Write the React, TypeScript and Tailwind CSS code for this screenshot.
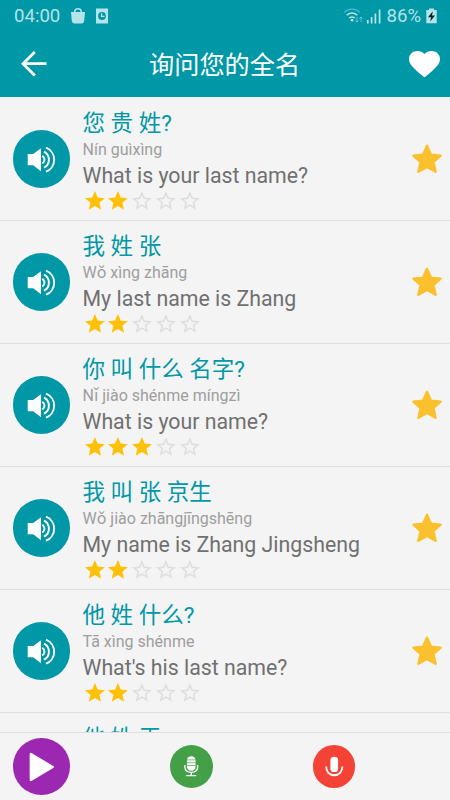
import React from "react";

type Phrase = { hanzi: string; pinyin?: string; english?: string; rating: number };

const phrases: Phrase[] = [
  { hanzi: "您 贵 姓?", pinyin: "Nín guìxìng", english: "What is your last name?", rating: 2 },
  { hanzi: "我 姓 张", pinyin: "Wǒ xìng zhāng", english: "My last name is Zhang", rating: 2 },
  { hanzi: "你 叫 什么 名字?", pinyin: "Nǐ jiào shénme míngzì", english: "What is your name?", rating: 3 },
  { hanzi: "我 叫 张 京生", pinyin: "Wǒ jiào zhāngjīngshēng", english: "My name is Zhang Jingsheng", rating: 2 },
  { hanzi: "他 姓 什么?", pinyin: "Tā xìng shénme", english: "What's his last name?", rating: 2 },
  { hanzi: "他 姓 王", rating: 2 },
];

function SpeakerIcon() {
  return (
    <svg viewBox="0 0 57 57" className="size-[57px]" fill="none" aria-hidden="true">
      <path d="M14.7 23H20.2L28 17.2V40.2L20.2 34.2H14.7Z" fill="#fff" />
      <g stroke="#fff" strokeWidth="1.9">
        <path d="M29.3 24.9A4.4 4.4 0 0 1 29.3 32.5" />
        <path d="M31 20.7A9 9 0 0 1 31 36.7" />
        <path d="M33 16.7A12.9 12.9 0 0 1 33 40.7" />
      </g>
    </svg>
  );
}

function RatingStar({ filled }: { filled: boolean }) {
  return (
    <svg viewBox="0 0 24 24" className="size-[23.8px]" aria-hidden="true">
      {filled ? (
        <path fill="#ffc107" d="M12 17.27 18.18 21l-1.64-7.03L22 9.24l-7.19-.61L12 2 9.19 8.63 2 9.24l5.46 4.73L5.82 21z" />
      ) : (
        <path fill="#dedede" d="M22 9.24l-7.19-.62L12 2 9.19 8.63 2 9.24l5.46 4.73L5.82 21 12 17.27 18.18 21l-1.63-7.03L22 9.24zM12 15.4l-3.76 2.27 1-4.28-3.32-2.88 4.38-.38L12 6.1l1.71 4.04 4.38.38-3.32 2.88 1 4.28L12 15.4z" />
      )}
    </svg>
  );
}

function FavoriteStar() {
  return (
    <svg viewBox="0 0 30 30" className="size-[30px]" aria-hidden="true">
      <path
        d="M15 1.8 19 10.7 28.6 11.7 21.4 18.1 23.6 27.8 15 23 6.4 27.8 8.6 18.1 1.4 11.7 11 10.7Z"
        fill="#fbc02d"
        stroke="#fbc02d"
        strokeWidth="2.4"
        strokeLinejoin="round"
      />
    </svg>
  );
}

function PhraseRow({ phrase }: { phrase: Phrase }) {
  return (
    <li className="flex h-[123px] shrink-0 items-center border-b border-[#dedede] pr-[8px] pl-[12.5px]">
      <button className="size-[57.5px] shrink-0 rounded-full bg-[#0097a7]" aria-label="Play">
        <SpeakerIcon />
      </button>
      <div className="ml-[12.5px] flex h-full flex-1 flex-col pt-[10px] whitespace-nowrap">
        <p className="h-[30px] text-[22.5px] leading-[30px] text-[#0097a7]">{phrase.hanzi}</p>
        <p className="h-[24px] text-[16px] leading-[23px] text-[#9e9e9e]">{phrase.pinyin}</p>
        <p className="h-[27px] text-[21.3px] leading-[28px] text-[#707070]">{phrase.english}</p>
        <div className="flex">
          {[1, 2, 3, 4, 5].map((n) => (
            <RatingStar key={n} filled={n <= phrase.rating} />
          ))}
        </div>
      </div>
      <FavoriteStar />
    </li>
  );
}

function StatusBar() {
  return (
    <div className="flex h-[31px] items-center pr-[13.5px] pl-[14px] text-[18.6px] leading-[31px] text-[#b4e3e8]">
      <span className="w-[48px] pt-[2px] whitespace-nowrap">04:00</span>
      <svg viewBox="0 0 16 18" className="ml-[8px] h-[18px] w-[16px]" aria-hidden="true">
        <path d="M1 5H15L14.2 14Q13.8 16.5 11.5 16.5H4.5Q2.2 16.5 1.8 14Z" fill="currentColor" />
        <path d="M4.8 6V4.5Q4.8 1.8 8 1.8T11.2 4.5V6" fill="none" stroke="currentColor" strokeWidth="1.5" />
      </svg>
      <svg viewBox="0 0 12 16" className="ml-[10px] h-[16px] w-[12px]" aria-hidden="true">
        <path d="M0 0.5H12V15.5H0Z" fill="currentColor" />
        <circle cx="6" cy="8" r="3.9" fill="#0097a7" />
        <path d="M5.6 5.2V8.3H8.6" fill="none" stroke="currentColor" strokeWidth="1.2" />
      </svg>
      <svg viewBox="0 0 40 18" className="ml-auto h-[18px] w-[40px]" fill="none" aria-hidden="true">
        <g stroke="currentColor" strokeWidth="1.5">
          <path d="M1 5.3Q9 -1.4 17 5.3" opacity=".45" />
          <path d="M3.7 8.1Q9 3.8 14.3 8.1" />
          <path d="M6.2 11Q9 8.8 11.8 11" />
        </g>
        <circle cx="9" cy="13.2" r="1.4" fill="currentColor" />
        <path d="M14 10V15M12.4 13.5 14 15.2 15.6 13.5M18 15V10M16.4 11.7 18 10 19.6 11.7" stroke="currentColor" opacity=".55" />
        <path d="M24.8 13V16.5M28.6 10V16.5M32.4 6.5V16.5M36.6 2.5V16.5" stroke="currentColor" strokeWidth="1.7" />
      </svg>
      <span className="ml-[4px] w-[39px] pt-[2px] whitespace-nowrap">86%</span>
      <svg viewBox="0 0 11 16" className="h-[16px] w-[11px]" aria-hidden="true">
        <path d="M3 0.5H8V2H10.7V15.3H0.3V2H3Z" fill="currentColor" />
        <path d="M6.8 3.2 2 9.2H5L4.2 13.5 9 7.5H6Z" fill="#062b30" />
      </svg>
    </div>
  );
}

function Header() {
  return (
    <header className="flex h-[97px] shrink-0 flex-col bg-[#0097a7]">
      <StatusBar />
      <div className="flex h-[66px] items-center pr-[10.5px] pl-[20px] text-white">
        <svg viewBox="0 0 28 28" className="size-[28px]" fill="none" aria-hidden="true">
          <path d="M26.5 13.7H3.2M14.8 2 3 13.7 14.8 25.4" stroke="#fff" strokeWidth="2.8" />
        </svg>
        <h1 className="ml-[101px] pt-[3px] text-[25.2px] leading-[36px]">询问您的全名</h1>
        <svg viewBox="2 3 20 18.35" className="ml-auto h-[26.5px] w-[31px]" preserveAspectRatio="none" aria-hidden="true">
          <path
            fill="#fff"
            d="M12 21.35l-1.45-1.32C5.4 15.36 2 12.28 2 8.5 2 5.42 4.42 3 7.5 3c1.74 0 3.41.81 4.5 2.09C13.09 3.81 14.76 3 16.5 3 19.58 3 22 5.42 22 8.5c0 3.78-3.4 6.86-8.55 11.54L12 21.35z"
          />
        </svg>
      </div>
    </header>
  );
}

function BottomBar() {
  return (
    <footer className="flex h-[68px] shrink-0 items-center border-t border-[#dedede] bg-[#f4f4f4] pl-[12.5px]">
      <button className="size-[57.5px] rounded-full bg-[#9c27b0]" aria-label="Play all">
        <svg viewBox="0 0 57 57" className="size-[57.5px]" aria-hidden="true">
          <path d="M17.7 16V41.5L39.3 28.7Z" fill="#fff" stroke="#fff" strokeWidth="2.4" strokeLinejoin="round" />
        </svg>
      </button>
      <button className="ml-[100px] size-[42.5px] rounded-full bg-[#43a047]" aria-label="Practice">
        <svg viewBox="0 0 42 42" className="size-[42.5px]" fill="none" aria-hidden="true">
          <rect x="16.7" y="11" width="8.6" height="14.4" rx="4.2" fill="#fff" />
          <path d="M16.5 14.7H25.5M16.5 17.5H25.5M16.5 20.3H25.5" stroke="#43a047" strokeWidth=".7" />
          <path d="M14.7 19.8V22Q15 27 21 27T27.3 22V19.8M21 27V30M16 30.2H26" stroke="#fff" strokeWidth="1.3" />
        </svg>
      </button>
      <button className="ml-[100px] size-[42.5px] rounded-full bg-[#f44336]" aria-label="Record">
        <svg viewBox="0 0 42 42" className="size-[42.5px]" fill="none" aria-hidden="true">
          <rect x="17.2" y="11.5" width="7.6" height="15.3" rx="3.6" fill="#fff" />
          <path d="M13 21.2C13 26.5 16.3 29.9 21 29.9S29 26.5 29 21.2" stroke="#fff" strokeWidth="1.8" />
        </svg>
      </button>
    </footer>
  );
}

export default function App() {
  return (
    <div className="flex h-[800px] w-[450px] flex-col overflow-hidden bg-[#f4f4f4] font-[Roboto,'Noto_Sans_CJK_SC',sans-serif]" lang="zh-CN">
      <Header />
      <ul className="flex min-h-0 flex-1 flex-col overflow-hidden pt-[1px]">
        {phrases.map((p) => (
          <PhraseRow key={p.hanzi} phrase={p} />
        ))}
      </ul>
      <BottomBar />
    </div>
  );
}
